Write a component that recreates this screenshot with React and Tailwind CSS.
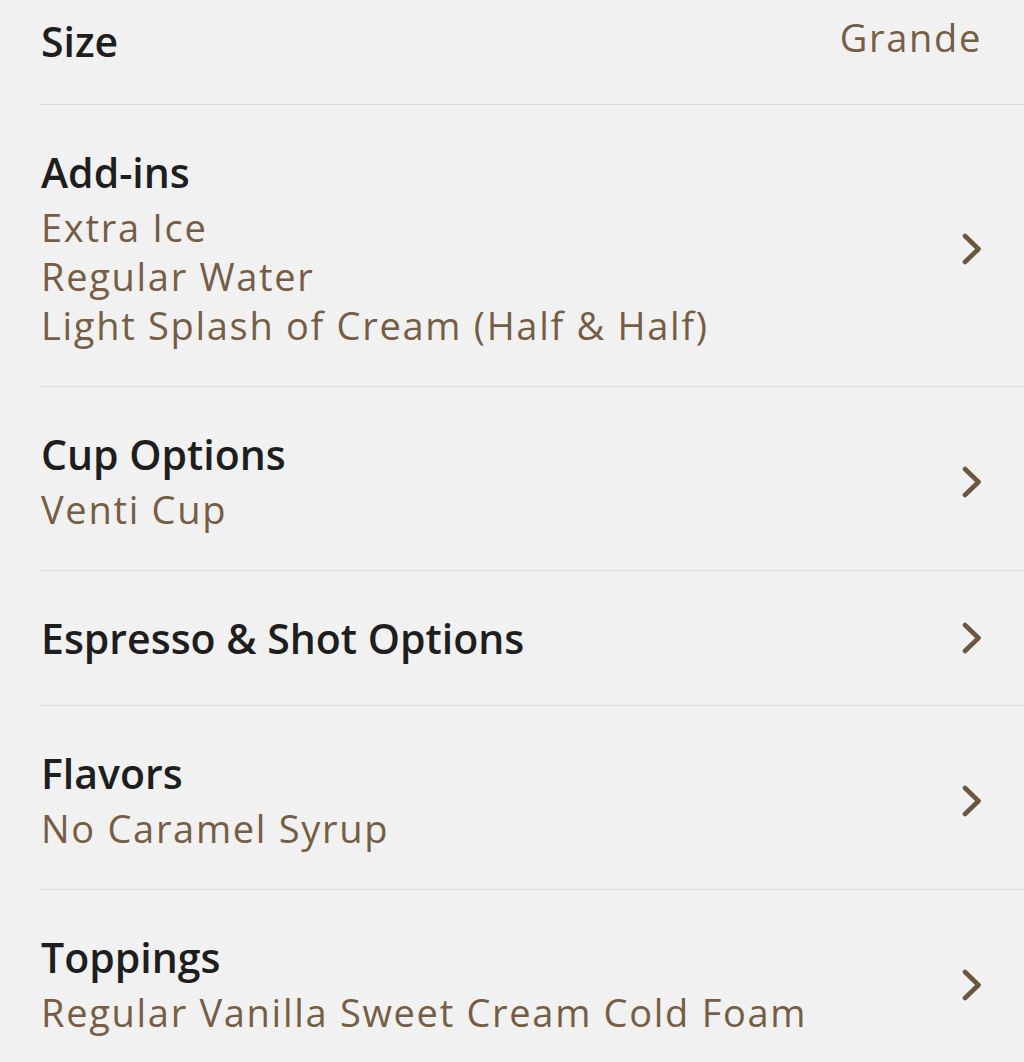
import React from 'react'

const rows = [
  { title: 'Add-ins', items: ['Extra Ice', 'Regular Water', 'Light Splash of Cream (Half & Half)'] },
  { title: 'Cup Options', items: ['Venti Cup'] },
  { title: 'Espresso & Shot Options', items: [] },
  { title: 'Flavors', items: ['No Caramel Syrup'] },
  { title: 'Toppings', items: ['Regular Vanilla Sweet Cream Cold Foam'] },
]

function Chevron() {
  return (
    <svg width="20" height="32" viewBox="0 0 20 32" fill="none" className="shrink-0">
      <polyline
        points="3,3 16.5,16 3,29"
        stroke="#6b5640"
        strokeWidth="4.6"
        strokeLinecap="round"
        strokeLinejoin="round"
      />
    </svg>
  )
}

function OptionRow({ title, items }) {
  const hasItems = items.length > 0
  return (
    <button
      className={
        hasItems
          ? 'w-full flex items-center justify-between text-left pr-[42px] pt-[43px] pb-[36px] border-b border-[#d9d9d9]'
          : 'w-full flex items-center justify-between text-left pr-[42px] py-[43px] border-b border-[#d9d9d9]'
      }
    >
      <div className="flex flex-col">
        <span className="text-[41px] leading-[48px] font-semibold text-[#1e1e1e]">{title}</span>
        {hasItems && (
          <div className="mt-[7px] flex flex-col">
            {items.map((item) => (
              <span key={item} className="text-[38px] leading-[49px] tracking-[1.7px] text-[#755e45]">
                {item}
              </span>
            ))}
          </div>
        )}
      </div>
      <Chevron />
    </button>
  )
}

export default function App() {
  return (
    <div
      className="min-h-screen bg-[#f1f1f1] pl-[41px] overflow-hidden"
      style={{ fontFamily: '"Open Sans", Lato, sans-serif' }}
    >
      {/* Size */}
      <div className="flex items-start justify-between pr-[42px] pt-[17px] pb-[39px] border-b border-[#d9d9d9]">
        <span className="text-[41px] leading-[48px] font-semibold text-[#1e1e1e]">Size</span>
        <span className="text-[38px] leading-[48px] tracking-[1.7px] -mt-[4px] text-[#755e45]">Grande</span>
      </div>

      {rows.map((row) => (
        <OptionRow key={row.title} title={row.title} items={row.items} />
      ))}
    </div>
  )
}
